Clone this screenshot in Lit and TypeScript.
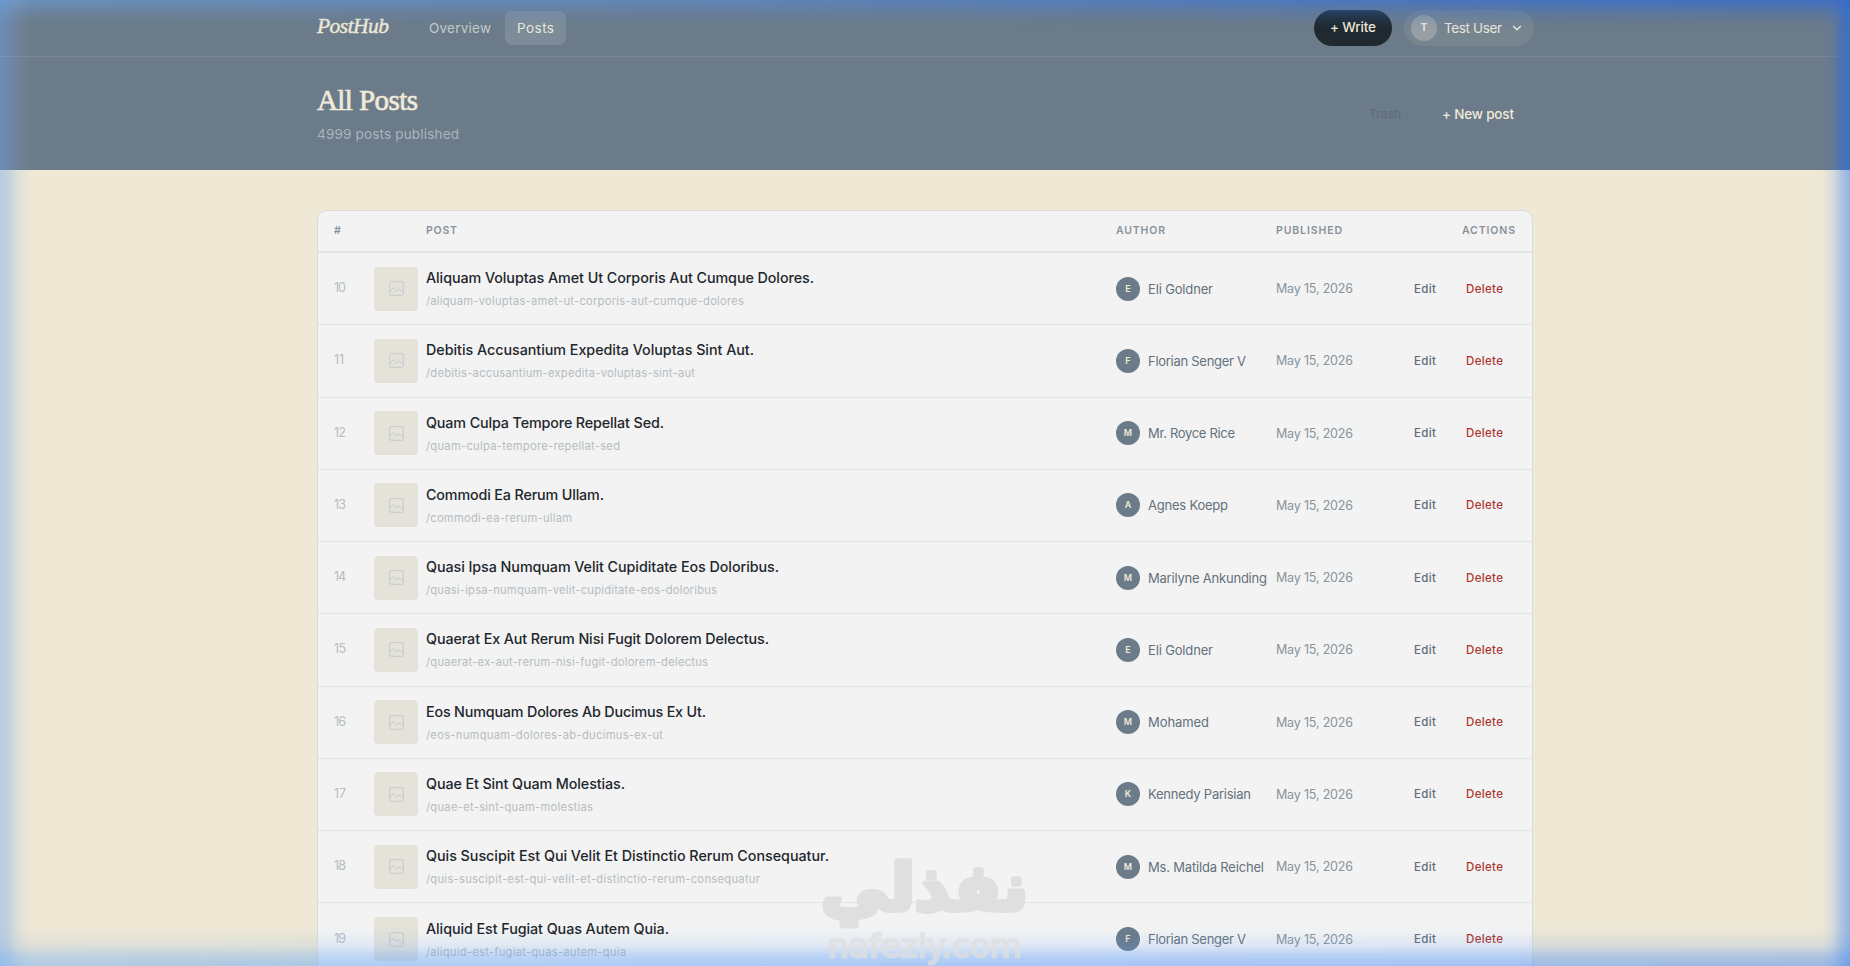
import { LitElement, html, css, svg } from "lit";
import { customElement, property } from "lit/decorators.js";

interface Post {
  title: string;
  slug: string;
  author: string;
  tw: number;
  sw: number;
  aw: number;
}

const row = (title: string, slug: string, author: string, tw: number, sw: number, aw: number): Post => ({
  title, slug, author, tw, sw, aw,
});

const posts: Post[] = [
  row("Aliquam Voluptas Amet Ut Corporis Aut Cumque Dolores.", "/aliquam-voluptas-amet-ut-corporis-aut-cumque-dolores", "Eli Goldner", 388, 318, 65),
  row("Debitis Accusantium Expedita Voluptas Sint Aut.", "/debitis-accusantium-expedita-voluptas-sint-aut", "Florian Senger V", 328, 269, 98),
  row("Quam Culpa Tempore Repellat Sed.", "/quam-culpa-tempore-repellat-sed", "Mr. Royce Rice", 238, 194, 87),
  row("Commodi Ea Rerum Ullam.", "/commodi-ea-rerum-ullam", "Agnes Koepp", 178, 146, 80),
  row("Quasi Ipsa Numquam Velit Cupiditate Eos Doloribus.", "/quasi-ipsa-numquam-velit-cupiditate-eos-doloribus", "Marilyne Ankunding", 353, 291, 119),
  row("Quaerat Ex Aut Rerum Nisi Fugit Dolorem Delectus.", "/quaerat-ex-aut-rerum-nisi-fugit-dolorem-delectus", "Eli Goldner", 343, 282, 65),
  row("Eos Numquam Dolores Ab Ducimus Ex Ut.", "/eos-numquam-dolores-ab-ducimus-ex-ut", "Mohamed", 280, 237, 61),
  row("Quae Et Sint Quam Molestias.", "/quae-et-sint-quam-molestias", "Kennedy Parisian", 199, 167, 103),
  row("Quis Suscipit Est Qui Velit Et Distinctio Rerum Consequatur.", "/quis-suscipit-est-qui-velit-et-distinctio-rerum-consequatur", "Ms. Matilda Reichel", 403, 334, 116),
  row("Aliquid Est Fugiat Quas Autem Quia.", "/aliquid-est-fugiat-quas-autem-quia", "Florian Senger V", 243, 200, 98),
];

/** One line of text whose tracking is adjusted so that it spans a given width. */
@customElement("fit-text")
class FitText extends LitElement {
  @property() text = "";
  @property({ type: Number }) w = 0;

  static styles = css`
    :host { display: inline-block; white-space: nowrap; }
    .t { display: inline-block; white-space: pre; }
  `;

  render() {
    return html`<span class="t">${this.text}</span>`;
  }

  updated() {
    const el = this.renderRoot.querySelector(".t") as HTMLElement;
    el.style.letterSpacing = "0";
    const natural = el.getBoundingClientRect().width;
    const n = this.text.length;
    if (n > 1 && this.w) {
      const gap = (this.w - natural) / (n - 1);
      el.style.letterSpacing = `${gap}px`;
      el.style.marginRight = `${-gap}px`;
    }
  }
}

const fit = (text: string, w: number) => html`<fit-text .text=${text} .w=${w}></fit-text>`;

@customElement("app-root")
class AppRoot extends LitElement {
  static styles = css`
    * { box-sizing: border-box; }
    :host {
      display: block; position: relative; height: 966px; overflow: hidden;
      background: #eee8d5; font-family: Inter, "Liberation Sans", sans-serif;
      color: #1d272d;
    }
    .top { height: 170px; background: #6b7b89; }
    .bar { height: 57px; border-bottom: 1px solid #798894; }
    .wrap { width: 1216px; margin: 0 auto; display: flex; align-items: center; }
    .bar .wrap { height: 56px; }
    .brand {
      font: italic 400 21.5px/26px "Liberation Serif", serif; color: #efe9d8;
      width: 72px; margin: -5px 28px 0 0; -webkit-text-stroke: .45px #efe9d8;
    }
    .nav { font-size: 13.5px; line-height: 34px; height: 34px; padding: 0 12px; border-radius: 7px; color: #c3ccca; margin-right: 2px; }
    .nav.on { background: #7d8c98; color: #e9e8dc; }
    .grow { flex: 1; }
    .write {
      width: 78px; height: 36px; border-radius: 18px; background: #1f292f; color: #efead9;
      font-size: 13.5px; font-weight: 450; line-height: 34px; text-align: center; margin-right: 12px;
    }
    .user {
      width: 130px; height: 36px; border-radius: 18px; background: #77858f; display: flex;
      align-items: center; padding: 0 10px 0 7px; color: #e9e7dc; font-size: 13.5px; margin-right: -1px;
    }
    .ava {
      width: 26px; height: 26px; border-radius: 50%; background: #969fa4; color: #ecebe3;
      font-size: 10.5px; font-weight: 600; line-height: 26px; text-align: center; margin-right: 7px;
    }
    .user svg { margin-left: 10px; }
    .head { height: 113px; }
    .head h1 {
      font: 400 29px/36px "Liberation Serif", serif; color: #efe9d8; margin: -2px 0 0;
      -webkit-text-stroke: .7px #efe9d8;
    }
    .head p { margin: 6px 0 0; font-size: 13.5px; line-height: 20px; color: #a9b6bd; }
    .trash { font-size: 12px; color: #5c6b79; margin-right: 41px; }
    .new { font-size: 13.5px; font-weight: 450; color: #f0ead9; margin: 1px 19px 0 0; }
    .card {
      width: 1216px; margin: 40px auto 0; height: 800px; background: #f3f3f3;
      border: 1px solid #d9dcdf; border-radius: 10px 10px 0 0;
    }
    .grid {
      display: grid; grid-template-columns: 40px 52px 690px 160px 1fr; align-items: center;
      padding: 0 16px;
    }
    .th {
      height: 42px; border-bottom: 2px solid #e2e5e7; font-size: 10.5px; font-weight: 600;
      color: #87929b; padding-bottom: 1px; padding-right: 17px;
    }
    .tr { height: 72.28px; border-bottom: 1px solid #e1e4e5; }
    .num { font-size: 12.5px; color: #b4bcc2; padding-bottom: 2px; }
    .num { font-feature-settings: "tnum" 0; }
    .thumb {
      width: 44px; height: 44px; border-radius: 4px; background: #e4e2d9; display: flex;
      align-items: center; justify-content: center;
    }
    .title { font-size: 14.3px; font-weight: 450; line-height: 20px; }
    .slug { font-size: 11.2px; line-height: 16px; color: #b5bdc2; margin-top: 5px; }
    .author { display: flex; align-items: center; gap: 8px; font-size: 13px; color: #63717c; }
    .dot {
      width: 24px; height: 24px; border-radius: 50%; background: #6b7b89; color: #eee9da;
      font-size: 9px; font-weight: 600; text-align: center; line-height: 23px;
    }
    .when { display: flex; align-items: center; justify-content: space-between; }
    .date { font-size: 12.5px; color: #89949c; }
    .acts { display: flex; font-size: 11.5px; font-weight: 450; color: #5f6c77; }
    .acts .del { color: #ad3630; margin: 0 13px 0 30px; }
    .glow { position: absolute; pointer-events: none; }
    .g-top {
      inset: 0 0 auto 0; height: 30px;
      background: linear-gradient(90deg, rgba(108,160,225,.55), rgba(88,140,220,.55) 40%, rgba(58,112,205,.78) 85%, rgba(54,108,205,.82));
      mask-image: linear-gradient(#000, rgba(0,0,0,.75) 18%, rgba(0,0,0,.3) 50%, rgba(0,0,0,.07) 80%, transparent);
    }
    .g-left {
      inset: 0 auto 0 0; width: 32px;
      background: linear-gradient(90deg, rgba(112,165,240,.42), rgba(112,165,240,.34) 25%, rgba(140,180,235,.12) 60%, transparent);
    }
    .g-right { right: 0; width: 28px; }
    .g-r1 { top: 0; height: 170px; background: linear-gradient(270deg, rgba(54,108,200,.82), rgba(56,110,198,.72) 25%, rgba(75,112,190,.25) 60%, transparent); }
    .g-r2 { top: 170px; bottom: 0; background: linear-gradient(270deg, rgba(80,140,236,.58), rgba(95,150,238,.45) 30%, rgba(150,180,240,.25) 60%, transparent); }
    .g-bot {
      inset: auto 0 0 0; height: 40px;
      background: linear-gradient(90deg, rgba(110,170,242,.48), rgba(95,160,250,.52) 50%, rgba(85,145,238,.55));
      mask-image: linear-gradient(0deg, #000, rgba(0,0,0,.75) 25%, rgba(0,0,0,.28) 50%, rgba(0,0,0,.07) 80%, transparent);
    }
    .mark { position: absolute; left: 810px; top: 840px; }
  `;

  private picture() {
    return svg`<svg width="15" height="15" viewBox="0 0 15 15" fill="none" stroke="#c2cccf" stroke-width="1" stroke-linejoin="round">
      <rect x=".7" y=".7" width="13.6" height="13.6" rx="1.2"/>
      <path d="M.8 10.2L4.6 6.6l3.2 3.2 2.4-2 4 3.4"/></svg>`;
  }

  render() {
    return html`
      <div class="top">
        <div class="bar"><div class="wrap">
          <div class="brand">${fit("PostHub", 72)}</div>
          <div class="nav">${fit("Overview", 62)}</div>
          <div class="nav on">${fit("Posts", 37)}</div>
          <div class="grow"></div>
          <div class="write">${fit("+ Write", 46)}</div>
          <div class="user">
            <div class="ava">T</div>${fit("Test User", 58)}
            <svg width="10" height="8" viewBox="0 0 10 8" fill="none" stroke="#ecebe3" stroke-width="1.5"><path d="M1.2 2l3.8 3.8L8.8 2"/></svg>
          </div>
        </div></div>
        <div class="wrap head">
          <div><h1>${fit("All Posts", 101)}</h1><p>${fit("4999 posts published", 142)}</p></div>
          <div class="grow"></div>
          <div class="trash">${fit("Trash", 32)}</div>
          <div class="new">${fit("+ New post", 72)}</div>
        </div>
      </div>
      <div class="card">
        <div class="grid th">
          <div>#</div><div></div><div>${fit("POST", 31)}</div><div>${fit("AUTHOR", 49)}</div>
          <div class="when">${fit("PUBLISHED", 66)}${fit("ACTIONS", 53)}</div>
        </div>
        ${posts.map((p, i) => html`
          <div class="grid tr">
            <div class="num">${i === 1 ? "11" : fit(String(10 + i), 12)}</div>
            <div class="thumb">${this.picture()}</div>
            <div>
              <div class="title">${fit(p.title, p.tw)}</div>
              <div class="slug">${fit(p.slug, p.sw)}</div>
            </div>
            <div class="author"><div class="dot">${p.author[0]}</div>${fit(p.author, p.aw)}</div>
            <div class="when">
              <span class="date">${fit("May 15, 2026", 77)}</span>
              <span class="acts">${fit("Edit", 22)}<span class="del">${fit("Delete", 37)}</span></span>
            </div>
          </div>`)}
      </div>
      <div class="glow g-top"></div>
      <div class="glow g-left"></div>
      <div class="glow g-right g-r1"></div>
      <div class="glow g-right g-r2"></div>
      <div class="glow g-bot"></div>
      <svg class="mark" width="230" height="126" viewBox="0 0 230 126" fill="#dfdfe0" stroke="#dfdfe0" stroke-linejoin="round">
        <text x="11" y="70" font-family="DejaVu Sans" font-weight="700" font-size="64" stroke-width="5.5" textLength="207" lengthAdjust="spacingAndGlyphs">نفذلي</text>
        <text x="18" y="117" font-family="DejaVu Sans" font-size="32" stroke-width="2.6" opacity=".75" textLength="194" lengthAdjust="spacingAndGlyphs">nafezly.com</text>
      </svg>
    `;
  }
}
